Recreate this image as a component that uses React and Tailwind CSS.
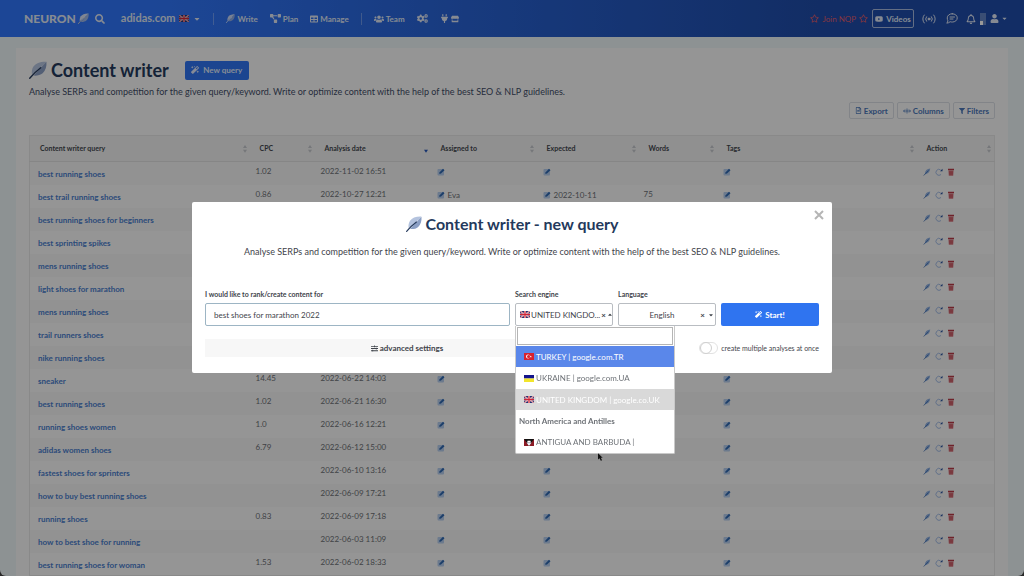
import React, { useState } from 'react';
import {
  FaCaretDown,
  FaCogs,
  FaFilter,
  FaMagic,
  FaPlug,
  FaProjectDiagram,
  FaRegBell,
  FaRegFileAlt,
  FaRegStar,
  FaSearch,
  FaSlidersH,
  FaStore,
  FaTable,
  FaUser,
  FaUsers,
  FaYoutube,
} from 'react-icons/fa';

const queries = [
  { query: 'best running shoes', cpc: '1.02', date: '2022-11-02 16:51' },
  { query: 'best trail running shoes', cpc: '0.86', date: '2022-10-27 12:21', assigned: 'Eva', expected: '2022-10-11', words: '75' },
  { query: 'best running shoes for beginners' },
  { query: 'best sprinting spikes' },
  { query: 'mens running shoes' },
  { query: 'light shoes for marathon' },
  { query: 'mens running shoes' },
  { query: 'trail runners shoes' },
  { query: 'nike running shoes' },
  { query: 'sneaker', cpc: '14.45', date: '2022-06-22 14:03' },
  { query: 'best running shoes', cpc: '1.02', date: '2022-06-21 16:30' },
  { query: 'running shoes women', cpc: '1.0', date: '2022-06-16 12:21' },
  { query: 'adidas women shoes', cpc: '6.79', date: '2022-06-12 15:00' },
  { query: 'fastest shoes for sprinters', date: '2022-06-10 13:16' },
  { query: 'how to buy best running shoes', date: '2022-06-09 17:21' },
  { query: 'running shoes', cpc: '0.83', date: '2022-06-09 17:18' },
  { query: 'how to best shoe for running', date: '2022-06-03 11:09' },
  { query: 'best running shoes for woman', cpc: '1.53', date: '2022-06-02 18:33' },
];

const columns = [
  { label: 'Content writer query', width: 'w-[220px]' },
  { label: 'CPC', width: 'w-[65px]' },
  { label: 'Analysis date', width: 'w-[116px]', sorted: true },
  { label: 'Assigned to', width: 'w-[106px]' },
  { label: 'Expected', width: 'w-[102px]' },
  { label: 'Words', width: 'w-[78px]' },
  { label: 'Tags', width: '' },
  { label: 'Action', width: 'w-[78px]' },
];

const Feather = ({ className, vane = '#b4c3de', shade = '#8b9fc4', quill = '#24395c' }) => (
  <svg viewBox="0 0 20 20" className={className} aria-hidden="true">
    <path d="M19.4 .8C13 .4 7.600 2.400 5 6 3.200 8.600 2.800 12 3.200 15L16 4.500z" fill={vane} />
    <path d="M19.4 .8c.4 5.200-1 10-4.200 12.800-2.600 2.200-6.400 3-10.200 2.600L16 4.500z" fill={shade} />
    <path d="M13 7.500C9 10.500 5 14 .8 19.200" fill="none" stroke={quill} strokeWidth="1.500" strokeLinecap="round" />
  </svg>
);

const FlagUK = ({ className }) => (
  <svg viewBox="0 0 20 14" className={className} aria-hidden="true">
    <rect width="20" height="14" fill="#22306f" />
    <path d="M0 0l20 14M20 0L0 14" stroke="#fff" strokeWidth="2.400" />
    <path d="M0 0l20 14M20 0L0 14" stroke="#cf2436" strokeWidth="1.200" />
    <path d="M10 0v14M0 7h20" stroke="#fff" strokeWidth="4" />
    <path d="M10 0v14M0 7h20" stroke="#cf2436" strokeWidth="2.600" />
  </svg>
);

const FlagTurkey = ({ className }) => (
  <svg viewBox="0 0 20 14" className={className} aria-hidden="true">
    <rect width="20" height="14" fill="#d8222f" />
    <circle cx="8" cy="7" r="4" fill="#fff" />
    <circle cx="9.200" cy="7" r="3.200" fill="#d8222f" />
    <path d="M13.500 4.800l.6 1.500 1.600.1-1.200 1 .4 1.600-1.400-.9-1.400.9.4-1.600-1.200-1 1.600-.1z" fill="#fff" />
  </svg>
);

const FlagUkraine = ({ className }) => (
  <svg viewBox="0 0 20 14" className={className} aria-hidden="true">
    <rect width="20" height="7" fill="#14148c" />
    <rect y="7" width="20" height="7" fill="#f2e52c" />
  </svg>
);

const FlagAntigua = ({ className }) => (
  <svg viewBox="0 0 20 14" className={className} aria-hidden="true">
    <rect width="20" height="14" fill="#8c1a24" />
    <path d="M0 0h20l-10 14z" fill="#111" />
    <path d="M5 7h10l-2 3H7z" fill="#e8eefb" />
    <path d="M7 10h6l-3 4z" fill="#fff" />
    <path d="M10 2l1.200 2.200 2.300-.7-.6 3.500H7.100l-.6-3.500 2.300.7z" fill="#fff" />
  </svg>
);

const EditIcon = () => (
  <svg viewBox="0 0 16 16" className="size-2 shrink-0" aria-hidden="true">
    <rect x="1" y="2" width="13" height="13" rx="2" fill="#b4cbec" />
    <path d="M4.500 12l.8-3.500L12 1.500 15 4.500 8 11.200z" fill="#2f68b0" />
  </svg>
);

const QuillIcon = () => (
  <svg viewBox="0 0 16 16" className="size-2" aria-hidden="true">
    <path d="M14.500 1C8 1.500 4 5 3.500 12.500c6-.5 10-4 11-11.500z" fill="#8fb0e0" />
    <path d="M11 5L1.500 15" stroke="#3d6cb0" strokeWidth="1.600" />
  </svg>
);

const RedoIcon = () => (
  <svg viewBox="0 0 16 16" className="size-2" aria-hidden="true">
    <path d="M12 13A6 6 0 1 1 11 3.500" fill="none" stroke="#9bb6e2" strokeWidth="1.800" />
    <path d="M15 1.500v5H10z" fill="#24509c" />
  </svg>
);

const TrashIcon = () => (
  <svg viewBox="0 0 16 16" className="size-2" aria-hidden="true">
    <path d="M3 5h10l-.6 10.500H3.600z" fill="#d4707a" />
    <path d="M2 1.500h12v3H2z" fill="#b83a47" />
    <path d="M6 7v6.500M10 7v6.500" stroke="#b83a47" strokeWidth="1.200" />
  </svg>
);

const BroadcastIcon = () => (
  <svg viewBox="0 0 28 20" className="h-[10px] w-[14px]" fill="none" stroke="currentColor" strokeWidth="2" strokeLinecap="round" aria-hidden="true">
    <circle cx="14" cy="10" r="2" fill="currentColor" />
    <path d="M9 5.500a7 7 0 0 0 0 9M19 5.500a7 7 0 0 1 0 9M4.500 2a12 12 0 0 0 0 16M23.500 2a12 12 0 0 1 0 16" />
  </svg>
);

const ChatIcon = () => (
  <svg viewBox="0 0 24 22" className="h-[11px] w-3" fill="none" stroke="currentColor" strokeWidth="2" strokeLinejoin="round" strokeLinecap="round" aria-hidden="true">
    <path d="M12.500 1.500c5.800 0 10 3.600 10 8.300s-4.200 8.300-10 8.300c-1.500 0-2.900-.2-4.200-.7C6.500 19 4 20.300 1.500 20.300c1.300-1.300 2.200-3 2.300-4.700C2.900 14 2.500 12 2.500 9.800c0-4.700 4.200-8.300 10-8.300z" />
    <path d="M8 8h9M8 12h6" />
  </svg>
);

const ColumnsIcon = () => (
  <svg viewBox="0 0 16 16" className="size-2" fill="none" stroke="currentColor" strokeWidth="1.500" aria-hidden="true">
    <path d="M1 8h14M4 5L1 8l3 3M12 5l3 3-3 3M8 3v10" />
  </svg>
);

const SortIcon = ({ sorted }) => (
  <svg viewBox="0 0 8 12" className="h-2 w-[6px] shrink-0" aria-hidden="true">
    {!sorted && <path d="M4 0l3 4.500H1z" fill="#c3c6cb" />}
    <path d="M1 7h6l-3 4.500z" fill={sorted ? '#2456b8' : '#c3c6cb'} />
  </svg>
);

const NavLink = ({ icon, children }) => (
  <a href="#" className="flex items-center gap-[2px] text-[8px] font-bold">
    {icon}
    {children}
  </a>
);

const Header = () => (
  <header className="flex h-[37px] shrink-0 items-center bg-linear-to-r from-[#3076fa] from-15% to-[#1f4ca8] to-80% pr-3 pl-6 text-[#dfe6f4]">
    <a href="#" className="flex items-center gap-[2px] text-[12px] font-black">
      NEURON
      <Feather className="size-[11px]" vane="#d5dff5" shade="#9db6e4" quill="#e6dcc8" />
    </a>
    <button type="button" aria-label="Search" className="ml-[6px]">
      <FaSearch className="size-[10px]" />
    </button>
    <button type="button" className="ml-4 flex items-center gap-1 text-[11px] font-bold">
      adidas.com
      <FlagUK className="h-[7px] w-[10px]" />
      <FaCaretDown className="size-2" />
    </button>
    <nav className="ml-3 flex items-center gap-3">
      <span className="h-3 w-px bg-white/30" />
      <NavLink icon={<Feather className="size-[9px]" vane="#c9d7f5" shade="#8fabe0" quill="#f4f7ff" />}>Write</NavLink>
      <NavLink icon={<FaProjectDiagram className="size-[11px]" />}>Plan</NavLink>
      <NavLink icon={<FaTable className="size-2" />}>Manage</NavLink>
      <span className="h-3 w-px bg-white/30" />
      <NavLink icon={<FaUsers className="size-[10px]" />}>Team</NavLink>
      <a href="#" aria-label="Settings">
        <FaCogs className="size-[11px]" />
      </a>
      <a href="#" aria-label="Integrations" className="flex items-end gap-[2px]">
        <FaPlug className="size-[9px]" />
        <FaStore className="size-2" />
      </a>
    </nav>
    <div className="ml-auto flex items-center">
      <a href="#" className="flex items-center gap-[3px] text-[8px] text-[#dc5a6c]">
        <FaRegStar className="size-[9px]" />
        Join NQP
        <FaRegStar className="size-[9px]" />
      </a>
      <button type="button" className="ml-1 flex h-[19px] w-[42px] items-center justify-center gap-[3px] rounded-xs border border-white/60 text-[8px] font-bold">
        <FaYoutube className="size-2" />
        Videos
      </button>
      <button type="button" aria-label="News" className="ml-2">
        <BroadcastIcon />
      </button>
      <button type="button" aria-label="Chat" className="ml-[10px]">
        <ChatIcon />
      </button>
      <button type="button" aria-label="Notifications" className="ml-2">
        <FaRegBell className="size-[10px]" />
      </button>
      <span className="ml-1 flex h-3 w-[6px] flex-col justify-end bg-white/30">
        <span className="h-1 w-[3px] bg-white" />
      </span>
      <button type="button" aria-label="Account" className="mr-1 ml-1 flex items-center gap-[2px]">
        <FaUser className="size-[9px]" />
        <FaCaretDown className="size-[7px]" />
      </button>
    </div>
  </header>
);

const ToolButton = ({ icon, children }) => (
  <button type="button" className="flex h-[17px] items-center gap-[2px] rounded-xs border border-[#d9dde3] px-[5px] text-[8px] font-bold text-[#4a76b8]">
    {icon}
    {children}
  </button>
);

const QueryTable = () => (
  <table className="w-full table-fixed border border-[#e4e4e4] text-left text-[8px] leading-[9px] text-[#6c6f74]">
    <thead className="border-b border-[#dfdfdf] bg-[#f0f0f0] text-[7px] text-[#43474d]">
      <tr className="h-[26px]">
        {columns.map((col) => (
          <th key={col.label} className={`pr-[2px] pl-[10px] font-bold ${col.width}`}>
            <span className="flex items-center justify-between">
              {col.label}
              <SortIcon sorted={col.sorted} />
            </span>
          </th>
        ))}
      </tr>
    </thead>
    <tbody>
      {queries.map((row, index) => (
        <tr key={index} className="h-[23px] align-top odd:bg-[#f3f3f3]">
          <td className="pt-2 pl-2 font-bold">
            <a href="#" className="text-[#4a7dcc]">{row.query}</a>
          </td>
          <td className="pt-[5px] pl-[6px]">{row.cpc}</td>
          <td className="pt-[5px] pl-[6px]">{row.date}</td>
          <td className="pt-[6px] pl-[6px]">
            <span className="flex items-center gap-[3px]"><EditIcon />{row.assigned}</span>
          </td>
          <td className="pt-[6px] pl-[6px]">
            <span className="flex items-center gap-[3px]"><EditIcon />{row.expected}</span>
          </td>
          <td className="pt-[5px] pl-[5px]">{row.words}</td>
          <td className="pt-[6px] pl-[6px]"><EditIcon /></td>
          <td className="pt-[6px] pl-[6px]">
            <span className="flex items-center gap-1">
              <button type="button" aria-label="Write"><QuillIcon /></button>
              <button type="button" aria-label="Refresh"><RedoIcon /></button>
              <button type="button" aria-label="Delete"><TrashIcon /></button>
            </span>
          </td>
        </tr>
      ))}
    </tbody>
  </table>
);

const SearchEngineList = () => (
  <div className="absolute top-full left-0 z-10 w-40 rounded-b-xs border border-t-0 border-[#c9c9c9] bg-white text-[8px] text-[#6f7378]">
    <div className="p-px">
      <input type="text" aria-label="Filter search engines" className="block h-[18px] w-full border border-[#b5b5b5] px-1 outline-none" />
    </div>
    <ul role="listbox" aria-label="Search engines">
      <li role="option" aria-selected="false" className="flex h-[21px] items-center gap-[2px] bg-[#5a87ea] pl-2 text-white">
        <FlagTurkey className="h-[7px] w-[10px]" />
        TURKEY | google.com.TR
      </li>
      <li role="option" aria-selected="false" className="flex h-[22px] items-center gap-[2px] pl-2">
        <FlagUkraine className="h-[7px] w-[10px]" />
        UKRAINE | google.com.UA
      </li>
      <li role="option" aria-selected="true" className="flex h-[21px] items-center gap-[2px] bg-[#d9d9d9] pl-2 text-white">
        <FlagUK className="h-[7px] w-[10px]" />
        UNITED KINGDOM | google.co.UK
      </li>
      <li role="presentation" className="flex h-[21px] items-center pl-[3px] font-bold">North America and Antilles</li>
      <li role="option" aria-selected="false" className="flex h-[22px] items-center gap-[2px] pl-2">
        <FlagAntigua className="h-[7px] w-[10px]" />
        ANTIGUA AND BARBUDA |
      </li>
    </ul>
    <svg viewBox="0 0 8 12" className="absolute top-full left-[82px] h-2 w-[5px]" aria-hidden="true">
      <path d="M0 0l7.500 7H4.500l2 4-2 1-2-4L0 10z" fill="#111" />
    </svg>
  </div>
);

const NewQueryModal = () => {
  const [query, setQuery] = useState('best shoes for marathon 2022');

  return (
    <div className="fixed inset-0 flex items-start justify-center bg-black/40 pt-[202px]">
      <div role="dialog" aria-labelledby="modal-title" className="relative w-5/8 rounded-xs bg-white px-[13px] pb-4 text-[#3f444b]">
        <button type="button" aria-label="Close" className="absolute top-2 right-2 text-[#b5b5b5]">
          <svg viewBox="0 0 10 10" className="size-[10px]" stroke="currentColor" strokeWidth="2" aria-hidden="true">
            <path d="M1 1l8 8M9 1L1 9" />
          </svg>
        </button>
        <h2 id="modal-title" className="flex items-center justify-center gap-1 pt-3 text-[16px] leading-5 font-bold text-[#24395c]">
          <Feather className="size-4" />
          Content writer - new query
        </h2>
        <p className="mt-3 text-center text-[9px] leading-3">
          Analyse SERPs and competition for the given query/keyword. Write or optimize content with the help of the best SEO &amp; NLP guidelines.
        </p>
        <form className="mt-[30px]">
          <div className="flex items-end gap-[5px]">
            <div className="grow">
              <label htmlFor="query" className="block text-[7px] leading-3 font-bold">I would like to rank/create content for</label>
              <input
                id="query"
                type="text"
                value={query}
                onChange={(e) => setQuery(e.target.value)}
                className="mt-[3px] block h-[23px] w-full rounded-xs border border-[#9db5c4] px-2 text-[8px] outline-none"
              />
            </div>
            <div className="relative w-[98px]">
              <label htmlFor="engine" className="block text-[7px] leading-3 font-bold">Search engine</label>
              <button id="engine" type="button" aria-haspopup="listbox" aria-expanded="true" className="mt-[3px] flex h-[23px] w-full items-center gap-px rounded-xs border border-[#b9bdc2] pr-[2px] pl-1 text-[8px]">
                <FlagUK className="h-[7px] w-[10px] shrink-0" />
                <span className="whitespace-nowrap">UNITED KINGDO...</span>
                <span className="font-bold">×</span>
                <FaCaretDown className="size-[6px] shrink-0 rotate-180" />
              </button>
              <SearchEngineList />
            </div>
            <div className="relative w-[98px]">
              <label htmlFor="language" className="block text-[7px] leading-3 font-bold">Language</label>
              <select id="language" className="mt-[3px] block h-[23px] w-full appearance-none rounded-xs border border-[#b9bdc2] pr-[10px] text-center text-[8px]">
                <option>English</option>
              </select>
              <span className="pointer-events-none absolute right-[2px] bottom-0 flex h-[23px] items-center gap-[3px] text-[8px] font-bold">
                ×
                <FaCaretDown className="size-[6px]" />
              </span>
            </div>
            <button type="submit" className="flex h-[23px] w-[98px] items-center justify-center gap-[3px] rounded-xs bg-[#2f74f0] text-[8px] font-bold text-white">
              <FaMagic className="size-[7px]" />
              Start!
            </button>
          </div>
          <div className="mt-[13px] flex items-center justify-between">
            <button type="button" className="flex h-[18px] w-[404px] items-center justify-center gap-[2px] bg-[#f7f7f7] text-[8px] font-bold">
              <FaSlidersH className="size-[7px]" />
              advanced settings
            </button>
            <label className="flex items-center gap-[3px] text-[7px]">
              <input type="checkbox" className="peer sr-only" />
              <span className="flex h-3 w-[19px] items-center rounded-full border border-[#e2e2e2] peer-checked:justify-end">
                <span className="size-3 rounded-full border border-[#cfcfcf] bg-white" />
              </span>
              create multiple analyses at once
            </label>
          </div>
        </form>
      </div>
    </div>
  );
};

const App = () => (
  <div className="h-screen overflow-hidden bg-[#444] font-[Lato,sans-serif]">
    <div className="flex h-full flex-col overflow-hidden rounded-b-md bg-[#ebf3f6]">
      <Header />
      <main className="mx-4 mt-[11px] grow bg-[#f9f9f9] px-[13px] pt-3">
        <div className="flex items-center">
          <h1 className="flex items-center gap-1 text-[18px] leading-5 font-bold text-[#24395c]">
            <Feather className="size-[18px]" />
            Content writer
          </h1>
          <button type="button" className="ml-4 flex h-[19px] w-16 items-center justify-center gap-1 rounded-xs bg-[#2f74f0] text-[8px] font-bold text-[#dfe8fa]">
            <FaMagic className="size-2" />
            New query
          </button>
        </div>
        <p className="mt-[6px] text-[9px] leading-3 text-[#3f4c66]">
          Analyse SERPs and competition for the given query/keyword. Write or optimize content with the help of the best SEO &amp; NLP guidelines.
        </p>
        <div className="mt-1 mb-4 flex justify-end gap-[3px]">
          <ToolButton icon={<FaRegFileAlt className="size-[7px]" />}>Export</ToolButton>
          <ToolButton icon={<ColumnsIcon />}>Columns</ToolButton>
          <ToolButton icon={<FaFilter className="size-[6px]" />}>Filters</ToolButton>
        </div>
        <QueryTable />
      </main>
    </div>
    <NewQueryModal />
  </div>
);

export default App;
